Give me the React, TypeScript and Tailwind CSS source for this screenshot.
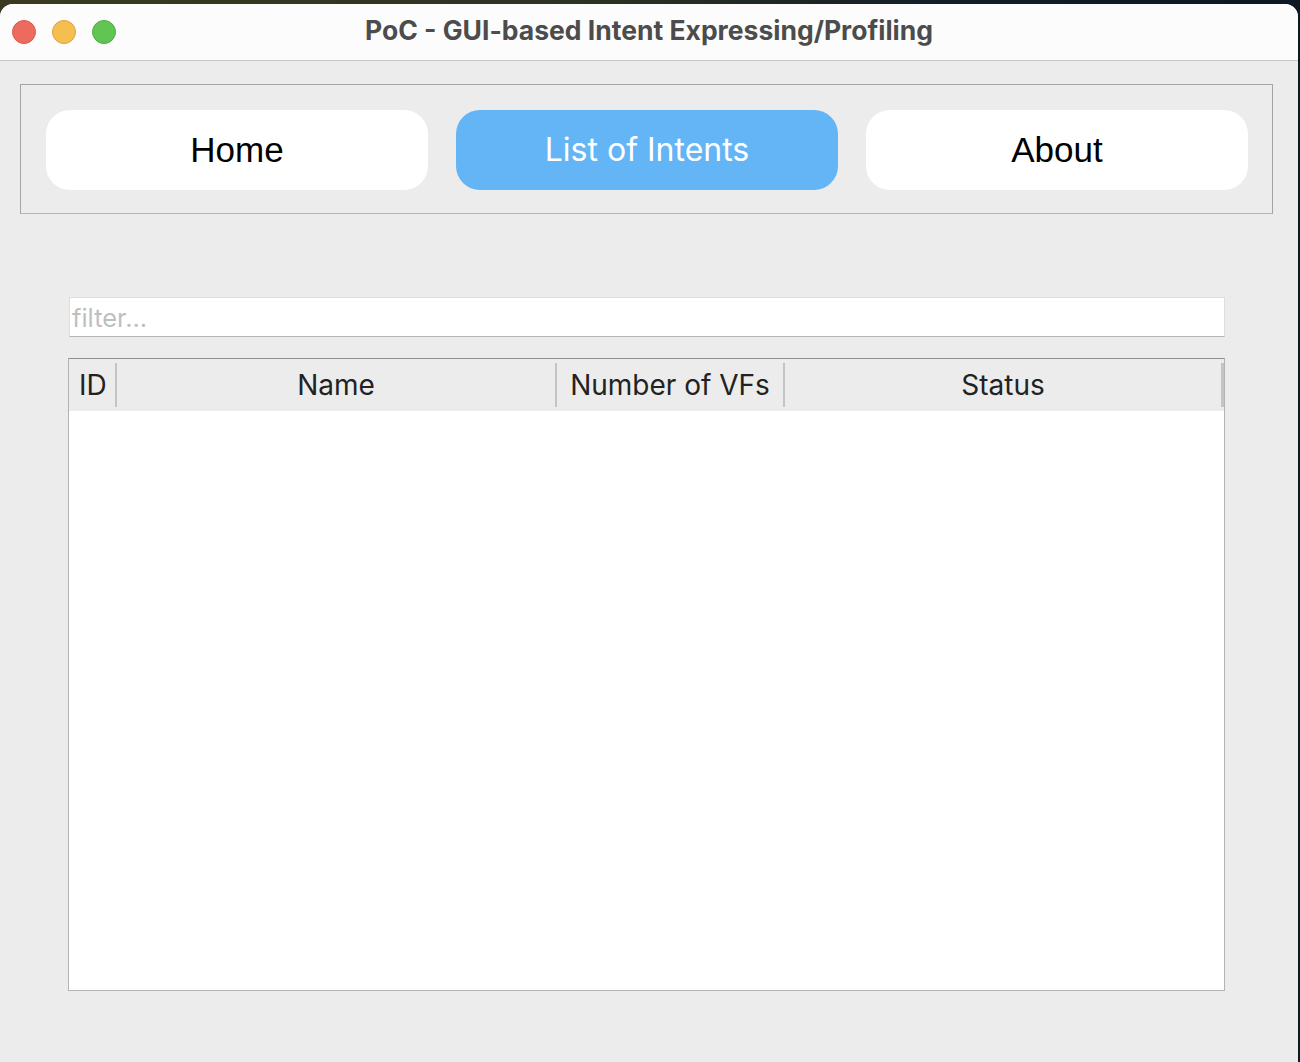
import React from "react";

export default function App() {
  return (
    <div
      className="w-[1300px] h-[1062px] overflow-hidden pt-[4px] pr-[2px]"
      style={{ background: "linear-gradient(90deg, #3a3a22 0%, #2d3322 45%, #101c28 75%, #0c1824 100%)" }}
    >
      <div className="w-[1298px] h-[1070px] rounded-[13px] bg-[#ececec] overflow-hidden flex flex-col">
        {/* Title bar */}
        <div className="relative h-[57px] bg-[#fcfcfc] border-b border-[#c6c6c6] flex items-center justify-center shrink-0">
          <div className="absolute left-[12px] top-[16px] flex gap-[16px]">
            <div className="w-[24px] h-[24px] rounded-full bg-[#ed6a5e] border border-[#d85a50]" />
            <div className="w-[24px] h-[24px] rounded-full bg-[#f5bf4f] border border-[#d9a53c]" />
            <div className="w-[24px] h-[24px] rounded-full bg-[#61c554] border border-[#52ab46]" />
          </div>
          <div
            className="text-[26.5px] font-bold text-[#4c4c4c] -mt-[2px]"
            style={{ fontFamily: "Inter, 'Noto Sans', sans-serif" }}
          >
            PoC - GUI-based Intent Expressing/Profiling
          </div>
        </div>

        {/* Content */}
        <div className="flex flex-col pt-[23px]">
          {/* Nav frame */}
          <div className="ml-[20px] w-[1253px] h-[130px] border border-[#a4a4a4] border-b-[#b6b6b6] pl-[25px] pt-[25px] flex gap-[28px]">
            <button
              className="w-[382px] h-[80px] rounded-[24px] bg-white text-black text-[35px] flex items-center justify-center"
              style={{ fontFamily: "'Liberation Sans', Arial, sans-serif" }}
            >
              <span>Home</span>
            </button>
            <button
              className="w-[382px] h-[80px] rounded-[24px] bg-[#64b5f6] text-white text-[32px] flex items-center justify-center"
              style={{ fontFamily: "Inter, 'Noto Sans', sans-serif" }}
            >
              <span>List of Intents</span>
            </button>
            <button
              className="w-[382px] h-[80px] rounded-[24px] bg-white text-black text-[35px] flex items-center justify-center"
              style={{ fontFamily: "'Liberation Sans', Arial, sans-serif" }}
            >
              <span>About</span>
            </button>
          </div>

          {/* Filter */}
          <div className="ml-[69px] mt-[83px] w-[1156px] h-[40px] bg-white border border-[#dedede] border-b-[#b4b4b4] flex items-center">
            <span
              className="pl-[2px] pt-[3px] text-[25.5px] text-[#bfbfbf]"
              style={{ fontFamily: "Inter, 'Noto Sans', sans-serif" }}
            >
              filter...
            </span>
          </div>

          {/* Table */}
          <div className="ml-[68px] mt-[21px] w-[1157px] h-[633px] bg-white border border-[#b4b4b4] border-t-[#8e8e8e] flex flex-col">
            <div
              className="h-[52px] bg-[#ececec] flex text-[28px] text-[#222222] shrink-0"
              style={{ fontFamily: "Inter, 'Noto Sans', sans-serif" }}
            >
              <div className="w-[48px] flex items-center pl-[10px] border-r-2 border-[#c4c4c4] my-[4px]">ID</div>
              <div className="w-[440px] flex items-center justify-center border-r-2 border-[#c4c4c4] my-[4px]">Name</div>
              <div className="w-[228px] flex items-center justify-center border-r-2 border-[#c4c4c4] my-[4px]">Number of VFs</div>
              <div className="flex-1 flex items-center justify-center border-r-[3px] border-[#c4c4c4] my-[4px]">Status</div>
            </div>
            <div className="flex-1 bg-white" />
          </div>
        </div>
      </div>
    </div>
  );
}
